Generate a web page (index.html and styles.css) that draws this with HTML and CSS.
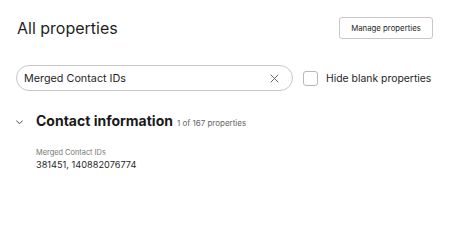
FILE: index.html
```html
<!DOCTYPE html>
<html>
<head>
<meta charset="utf-8">
<link rel="stylesheet" href="styles.css">
</head>
<body>
<div class="panel">
  <div class="header">
    <h1 class="title">All properties</h1>
    <button class="btn">Manage properties</button>
  </div>
  <div class="search-row">
    <div class="search">
      <span class="search-text">Merged Contact IDs</span>
      <svg class="clear" width="9" height="9" viewBox="0 0 9 9"><path d="M1 1L8 8M8 1L1 8" stroke="#666" stroke-width="1" fill="none" stroke-linecap="round"/></svg>
    </div>
    <label class="check">
      <span class="box"></span>
      <span class="check-label">Hide blank properties</span>
    </label>
  </div>
  <div class="section-head">
    <svg class="chev" width="7" height="5" viewBox="0 0 7 5"><path d="M0.6 0.8L3.5 3.8L6.4 0.8" stroke="#444" stroke-width="1" fill="none" stroke-linecap="round" stroke-linejoin="round"/></svg>
    <span class="section-title">Contact information</span>
    <span class="section-count">1 of 167 properties</span>
  </div>
  <div class="field">
    <div class="field-label">Merged Contact IDs</div>
    <div class="field-value">381451, 140882076774</div>
  </div>
</div>
</body>
</html>
```
FILE: styles.css
```css
* { box-sizing: border-box; }
html, body { margin: 0; padding: 0; background: #fff; }
body { font-family: Inter, "Noto Sans", sans-serif; color: #1f1f1f; }
.panel { padding: 17px 17px 0 16px; }
.header { display: flex; justify-content: space-between; align-items: center; height: 22px; }
.title { margin: 0 0 0 1px; font-size: 16px; font-weight: 400; line-height: 22px; color: #1f1f1f; }
.btn {
  width: 94px; height: 22px; border: 1px solid #c8c8c8; border-radius: 3px; background: #fff;
  font-family: inherit; font-size: 7.8px; color: #1f1f1f; padding: 0; display: flex; align-items: center; justify-content: center;
}
.search-row { display: flex; align-items: center; margin-top: 26px; height: 26px; }
.search {
  flex: 0 0 277px; height: 26px; border: 1px solid #c8c8c8; border-radius: 13px;
  display: flex; align-items: center; justify-content: space-between; padding: 0 13px 0 7px;
}
.search-text { font-size: 10.8px; color: #1f1f1f; }
.check { display: flex; align-items: center; margin-left: 10px; white-space: nowrap; }
.box { flex: 0 0 15px; height: 15px; border: 1px solid #b8b8b8; border-radius: 3px; }
.check-label { margin-left: 8px; font-size: 10.4px; color: #1f1f1f; }
.section-head { display: flex; align-items: baseline; margin-top: 21px; height: 20px; }
.chev { align-self: center; width: 7px; height: 5px; margin-right: 13px; }
.section-title { font-size: 14px; font-weight: 700; color: #1a1a1a; }
.section-count { font-size: 8px; color: #666; margin-left: 4px; }
.field { padding-left: 20px; margin-top: 15px; }
.field-label { font-size: 7.4px; line-height: 11px; color: #777; }
.field-value { font-size: 9.2px; line-height: 14px; color: #1f1f1f; }
```
